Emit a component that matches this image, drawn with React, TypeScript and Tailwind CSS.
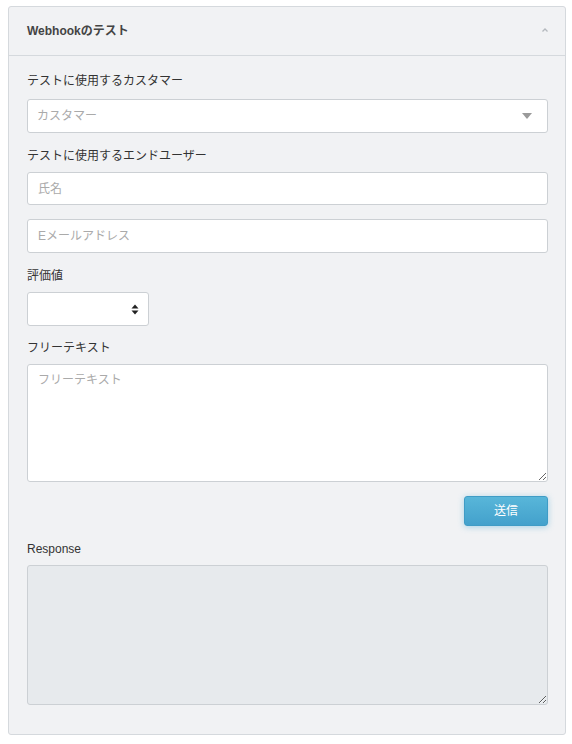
import React from "react";

const font = { fontFamily: '"Liberation Sans", "Noto Sans CJK JP", sans-serif' };

function Label({ children, mb = "mb-[7px]" }: { children: React.ReactNode; mb?: string }) {
  return <div className={`h-[18px] text-[12px] leading-[18px] text-[#333] ${mb}`}>{children}</div>;
}

export default function App() {
  return (
    <div className="w-[572px] h-[744px] bg-white pt-[6px] pl-[8px]" style={font}>
      <div className="w-[558px] border border-[#d5d9dd] rounded-[3px] bg-[#f1f2f4]">
        {/* header */}
        <div className="h-[49px] border-b border-[#d5d9dd] flex items-center justify-between pl-[18px] pr-[16px]">
          <span className="text-[12px] font-bold text-[#444]">Webhookのテスト</span>
          <svg width="8" height="6" viewBox="0 0 8 6" className="mt-[-2px]">
            <path d="M1.5 4.5 L4 2 L6.5 4.5" fill="none" stroke="#b4b9be" strokeWidth="1.3" />
          </svg>
        </div>

        {/* body */}
        <div className="pl-[18px] pr-[17px] pt-[16px] pb-[29px]">
          <Label mb="mb-[9px]">テストに使用するカスタマー</Label>
          <div className="h-[34px] bg-white border border-[#ccd0d4] rounded-[3px] flex items-center justify-between pl-[9px] pr-[15px]">
            <span className="text-[12px] text-[#aaa]">カスタマー</span>
            <svg width="10" height="6" viewBox="0 0 10 6">
              <path d="M0 0 H10 L5 6 Z" fill="#9a9a9a" />
            </svg>
          </div>

          <div className="mt-[14px]">
            <Label>テストに使用するエンドユーザー</Label>
            <input
              placeholder="氏名"
              className="block w-full h-[33px] bg-white border border-[#ccd0d4] rounded-[3px] px-[10px] text-[12px] placeholder:text-[#aaa] outline-none"
            />
            <input
              placeholder="Eメールアドレス"
              className="block w-full h-[34px] mt-[14px] bg-white border border-[#ccd0d4] rounded-[3px] px-[10px] text-[12px] placeholder:text-[#aaa] outline-none"
            />
          </div>

          <div className="mt-[14px]">
            <Label>評価値</Label>
            <div className="w-[122px] h-[34px] bg-white border border-[#ccd0d4] rounded-[3px] flex items-center justify-end pr-[9px]">
              <svg width="8" height="11" viewBox="0 0 8 11">
                <path d="M0.5 4.5 L4 0.5 L7.5 4.5 Z M0.5 6.5 L4 10.5 L7.5 6.5 Z" fill="#222" />
              </svg>
            </div>
          </div>

          <div className="mt-[13px]">
            <Label>フリーテキスト</Label>
            <textarea
              placeholder="フリーテキスト"
              className="block w-full h-[118px] bg-white border border-[#ccd0d4] rounded-[3px] px-[10px] py-[6px] text-[12px] placeholder:text-[#aaa] outline-none"
            />
          </div>

          <div className="flex justify-end mt-[14px]">
            <button className="w-[84px] h-[30px] rounded-[3px] bg-gradient-to-b from-[#58b6d9] to-[#43a1cc] border border-[#3f9cc6] text-white text-[12px] shadow-[0_1px_6px_rgba(70,170,215,0.45)]">
              送信
            </button>
          </div>

          <div className="mt-[14px]">
            <Label>Response</Label>
            <textarea
              readOnly
              className="block w-full h-[140px] bg-[#e7eaed] border border-[#ccd0d4] rounded-[3px] outline-none"
            />
          </div>
        </div>
      </div>
    </div>
  );
}
